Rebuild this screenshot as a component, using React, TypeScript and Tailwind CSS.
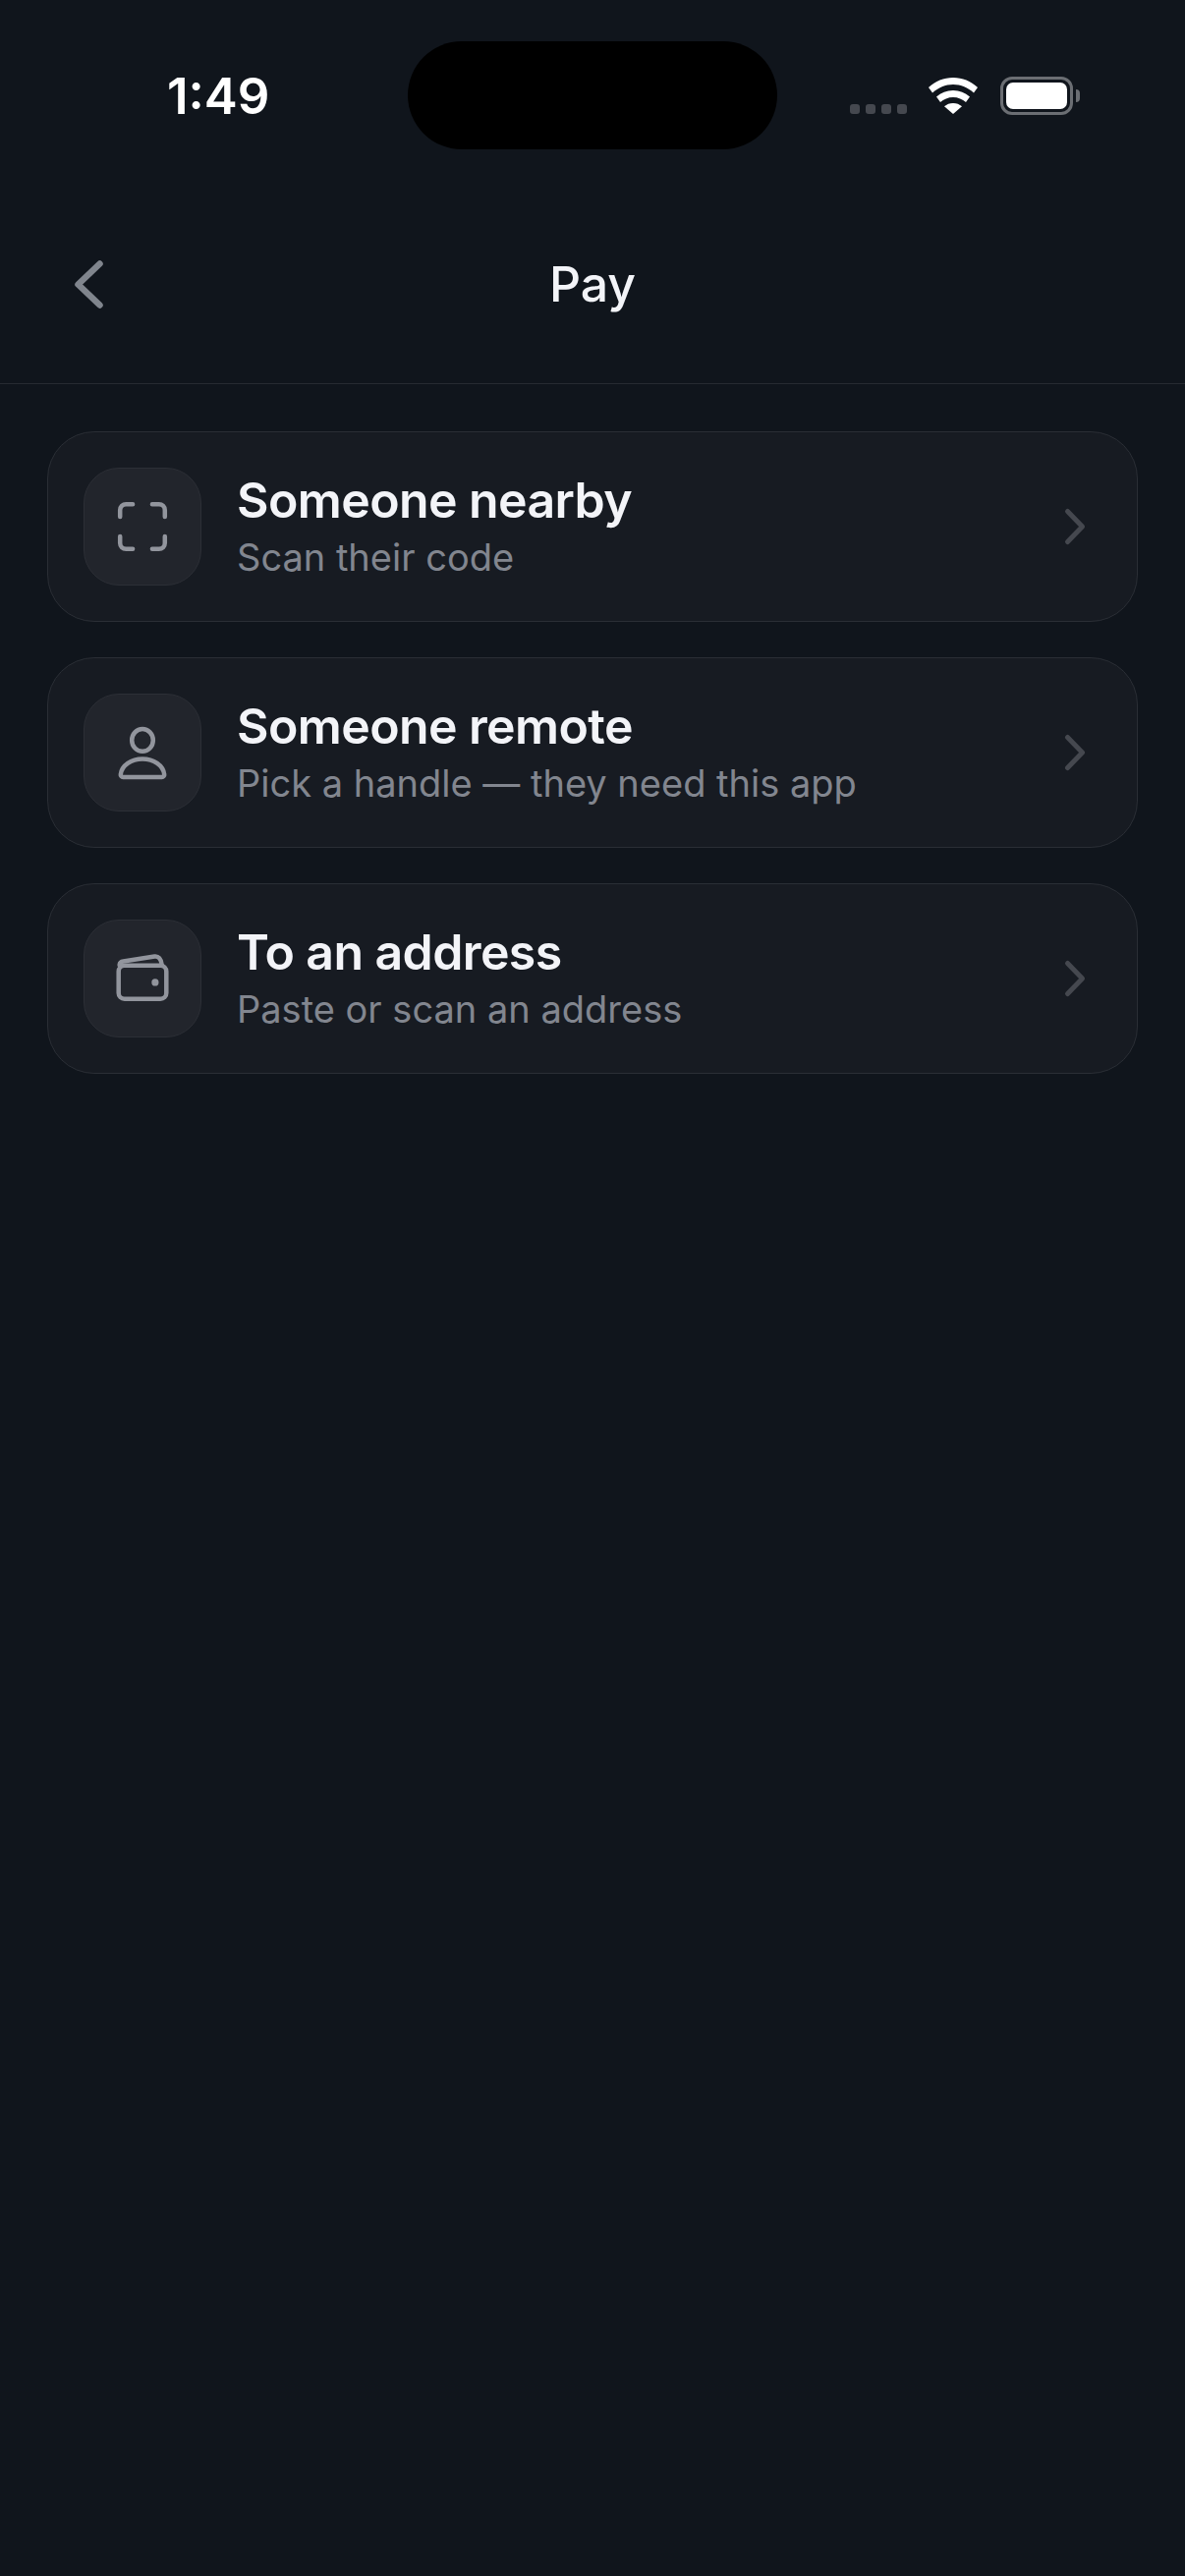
type PayOptionProps = {
  title: string;
  subtitle: string;
  icon: React.ReactNode;
};

function ScanIcon() {
  return (
    <svg viewBox="0 0 24 24" className="h-[72px] w-[72px]" fill="none" stroke="#92959d" strokeWidth="1.5" strokeLinecap="round">
      <path d="M4.400 8.700V6.400a2 2 0 0 1 2-2h2.300" />
      <path d="M15.300 4.400h2.300a2 2 0 0 1 2 2v2.300" />
      <path d="M4.400 15.300v2.300a2 2 0 0 0 2 2h2.300" />
      <path d="M15.300 19.600h2.300a2 2 0 0 0 2-2v-2.300" />
    </svg>
  );
}

function PersonIcon() {
  return (
    <svg viewBox="0 0 24 24" className="h-[72px] w-[72px]" fill="none" stroke="#92959d" strokeWidth="1.5" strokeLinejoin="round">
      <ellipse cx="12" cy="7.800" rx="3.600" ry="3.800" />
      <path d="M5.400 20.300h13.200a.8.8 0 0 0 .8-.9C19 16.300 15.800 14.200 12 14.200s-7 2.100-7.400 5.200a.8.8 0 0 0 .8.9z" />
    </svg>
  );
}

function WalletIcon() {
  return (
    <svg viewBox="0 0 24 24" className="h-[72px] w-[72px]" fill="none" stroke="#92959d" strokeWidth="1.5" strokeLinecap="round" strokeLinejoin="round">
      <rect x="3.900" y="7.600" width="16.200" height="11.300" rx="2" />
      <path d="M4.200 7.400c.1-.7.6-1.100 1.300-1.200l10.600-1.700c1.200-.2 2.300.8 2.500 3" />
      <circle cx="16.300" cy="13.300" r="1.200" fill="#92959d" stroke="none" />
    </svg>
  );
}

function PayOption({ title, subtitle, icon }: PayOptionProps) {
  return (
    <div className="flex items-center gap-[36px] rounded-[48px] border border-[#2a2e35] bg-[#171b22] p-[36px]">
      <div className="flex h-[120px] w-[120px] shrink-0 items-center justify-center rounded-[36px] border border-[#2c2f36] bg-[#22252c]">
        {icon}
      </div>
      <div className="min-w-0 flex-1">
        <p className="text-[50px] leading-[60px] font-semibold tracking-[-0.6px] text-[#f3f4f8]">{title}</p>
        <p className="pt-[3px] text-[38px] leading-[51px] text-[#82868f]">{subtitle}</p>
      </div>
      <svg viewBox="0 0 48 48" className="h-[48px] w-[48px] shrink-0" fill="none" stroke="#45484f" strokeWidth="5" strokeLinecap="round" strokeLinejoin="round">
        <path d="M13.500 8.500 28.500 24 13.500 39.500" />
      </svg>
    </div>
  );
}

export default function App() {
  return (
    <div className="h-[2622px] bg-[#10151c] font-['Inter',sans-serif]">
      <div className="flex h-[187px] items-start pt-[42px]">
        <div className="w-[415px] pl-[170px] pt-[26px]">
          <p className="text-[51px] leading-[60px] font-semibold text-white">1:49</p>
        </div>
        <div className="h-[110px] w-[376px] rounded-full bg-black" />
        <div className="flex h-[110px] items-start pl-[74px]">
          <div className="mt-[64px] flex gap-[6px]">
            <span className="h-[10px] w-[10px] rounded-[3px] bg-[#45484f]" />
            <span className="h-[10px] w-[10px] rounded-[3px] bg-[#45484f]" />
            <span className="h-[10px] w-[10px] rounded-[3px] bg-[#45484f]" />
            <span className="h-[10px] w-[10px] rounded-[3px] bg-[#45484f]" />
          </div>
          <svg viewBox="0 0 50 37" className="mt-[37px] ml-[22px] h-[37px] w-[50px]" fill="white">
            <path d="M25 0C15.500 0 7 3.600 0 10l4 5.500C10 10.200 17 7 25 7s15 3.200 21 8.500L50 10C43 3.600 34.500 0 25 0z" />
            <path d="M25 13c-6.500 0-12.300 2.300-17 6.500l4 5.500c3.400-3 8-5 13-5s9.600 2 13 5l4-5.500C37.300 15.300 31.500 13 25 13z" />
            <path d="M25 26c-3.500 0-6.500 1.200-9 3.300L25 37l9-7.700C31.500 27.200 28.500 26 25 26z" />
          </svg>
          <div className="mt-[36px] ml-[23px] flex items-center">
            <div className="h-[39px] w-[74px] rounded-[12px] border-[3px] border-[#6b6e73] p-[3px]">
              <div className="h-full w-full rounded-[7px] bg-white" />
            </div>
            <div className="ml-[3px] h-[13px] w-[4px] rounded-r-full bg-[#6b6e73]" />
          </div>
        </div>
      </div>

      <div className="grid h-[204px] grid-cols-[1fr_auto_1fr] items-center border-b border-[#262a31] pl-[60px]">
        <svg viewBox="0 0 60 60" className="h-[60px] w-[60px]" fill="none" stroke="#80858d" strokeWidth="6.500" strokeLinecap="round" strokeLinejoin="round">
          <path d="M41.500 9.500 19.500 30.500 41.500 51.500" />
        </svg>
        <p className="-ml-[60px] text-[50px] leading-[60px] font-medium text-[#f3f4f8]">Pay</p>
        <div />
      </div>

      <div className="flex flex-col gap-[36px] px-[48px] pt-[48px]">
        <PayOption title="Someone nearby" subtitle="Scan their code" icon={<ScanIcon />} />
        <PayOption title="Someone remote" subtitle="Pick a handle — they need this app" icon={<PersonIcon />} />
        <PayOption title="To an address" subtitle="Paste or scan an address" icon={<WalletIcon />} />
      </div>
    </div>
  );
}
